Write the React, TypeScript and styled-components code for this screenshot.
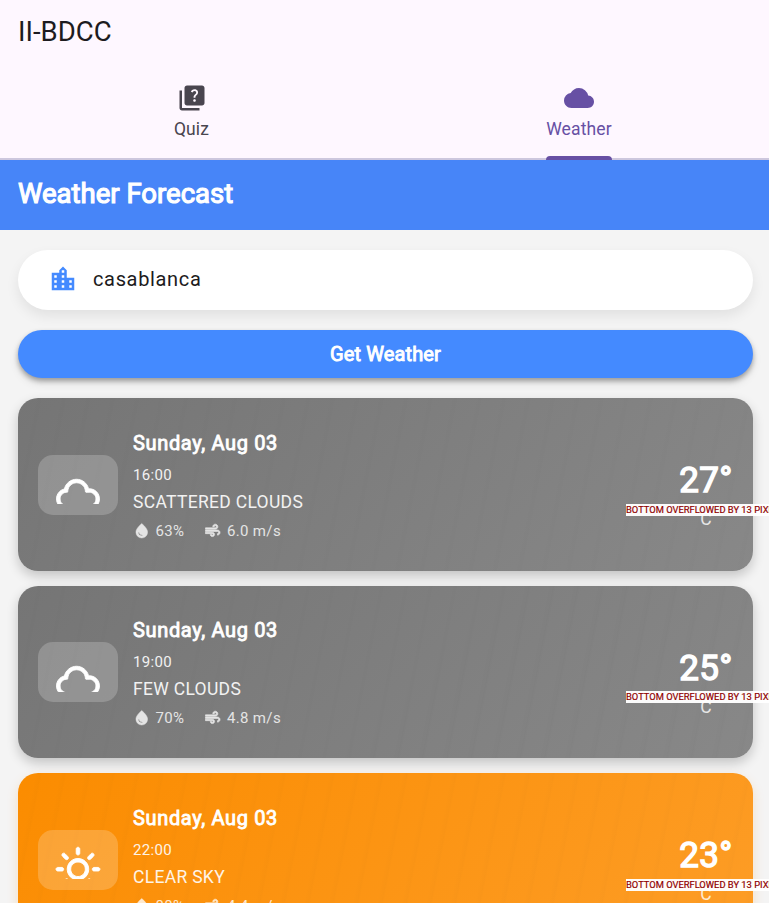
import React from 'react';
import styled, { createGlobalStyle } from 'styled-components';
import { MdQuiz, MdCloud, MdLocationCity, MdWaterDrop, MdAir } from 'react-icons/md';
import { WiCloud, WiDaySunny } from 'react-icons/wi';

const GlobalStyle = createGlobalStyle`
  * { box-sizing: border-box; }
  html, body { margin: 0; height: 903px; overflow: hidden; }
  body { background: #f4f4f4; font-family: Roboto, sans-serif; font-weight: 400; }
  svg { display: block; flex: none; }
  svg [fill="none"] { stroke: none; }
`;

const Screen = styled.div`
  width: 769px;
  height: 903px;
  overflow: hidden;
  display: flex;
  flex-direction: column;
`;

const AppBar = styled.header`
  flex: none;
  height: 160px;
  background: linear-gradient(#fef7ff 158.2px, #cdc7de 158.2px);
  display: flex;
  flex-direction: column;
`;

const AppTitle = styled.h1`
  margin: 0;
  height: 70px;
  padding: 15px 18px 0;
  font-size: 27.5px;
  line-height: 34px;
  font-weight: 400;
  color: #1d1b20;
`;

const Tabs = styled.nav`
  height: 90px;
  display: grid;
  grid-template-columns: 383px 1fr;
  column-gap: 6px;
`;

const Tab = styled.div<{ $active?: boolean }>`
  display: flex;
  flex-direction: column;
  align-items: center;
  padding-top: 13px;
  color: ${(p) => (p.$active ? '#6750a4' : '#49454f')};
  font-size: 17.5px;
  line-height: 25px;
  letter-spacing: 0.125px;
`;

const TabLabel = styled.span`
  margin-top: 4px;
`;

const Indicator = styled.div`
  width: 66px;
  height: 4px;
  margin-top: 14px;
  border-radius: 4px 4px 0 0;
  background: #6750a4;
`;

const Banner = styled.h2`
  flex: none;
  margin: 0;
  height: 69.5px;
  padding: 0 18px;
  font-size: 27.5px;
  line-height: 67px;
  font-weight: 400;
  -webkit-text-stroke: 1.15px #fff;
  color: #fff;
  background: #4785f8;
`;

const Content = styled.main`
  flex: none;
  display: flex;
  flex-direction: column;
  padding: 20px 16px 0 18px;
`;

const SearchField = styled.div`
  height: 60px;
  border-radius: 30px;
  background: #fff;
  box-shadow: 0 6px 13px rgba(0, 0, 0, 0.08);
  display: flex;
  align-items: center;
  gap: 15px;
  padding-left: 30px;
  padding-bottom: 1px;
  color: #448aff;
`;

const City = styled.span`
  color: #1d1b20;
  font-size: 20px;
  letter-spacing: 0.65px;
`;

const Button = styled.button`
  height: 48.5px;
  margin: 20px 0 20.4px;
  border: 0;
  border-radius: 25px;
  background: #448aff;
  box-shadow: 0 3px 5px rgba(0, 0, 0, 0.3), 0 5px 10px rgba(0, 0, 0, 0.1);
  color: #fff;
  font: 400 20px Roboto, sans-serif;
  letter-spacing: 0.12px;
  -webkit-text-stroke: 0.9px #fff;
`;

const Forecasts = styled.section`
  display: flex;
  flex-direction: column;
  gap: 15px;
`;

const Card = styled.article<{ $sunny?: boolean }>`
  height: 172.5px;
  border-radius: 20px;
  padding: 0 20px;
  display: flex;
  align-items: center;
  background:
    repeating-linear-gradient(101deg, rgba(0, 0, 0, 0) 0 17px, rgba(0, 0, 0, 0.01) 22px, rgba(0, 0, 0, 0) 24px),
    ${(p) => (p.$sunny ? 'linear-gradient(135deg, #fb8c00, #fd9d27)' : 'linear-gradient(135deg, #757575, #888888)')};
  box-shadow: 0 5px 12px ${(p) => (p.$sunny ? 'rgba(251, 140, 0, 0.2)' : 'rgba(0, 0, 0, 0.2)')};
`;

const IconTile = styled.div`
  width: 80px;
  height: 60px;
  border-radius: 15px;
  background: rgba(255, 255, 255, 0.2);
  color: #fff;
  display: flex;
  justify-content: center;
  padding-top: 10px;
`;

const IconClip = styled.div`
  width: 62px;
  height: 39.5px;
  overflow: hidden;

  svg {
    margin-top: -1px;
    stroke: currentColor;
    stroke-width: 0.45px;
  }
`;

const Details = styled.div`
  flex: 1;
  margin-left: 15px;
  padding-top: 1px;
  color: #fff;
`;

const DateLine = styled.div`
  font-size: 20px;
  line-height: 28px;
  letter-spacing: 0.65px;
  -webkit-text-stroke: 0.85px #fff;
`;

const Time = styled.div`
  margin-top: 8px;
  font-size: 15px;
  line-height: 21px;
  letter-spacing: 0.33px;
  opacity: 0.9;
`;

const Condition = styled.div`
  margin-top: 4px;
  font-size: 17.5px;
  line-height: 25px;
  letter-spacing: 0.31px;
  opacity: 0.9;
`;

const Metrics = styled.div`
  display: flex;
  gap: 20px;
  margin-top: 5px;
  color: #fff;
  opacity: 0.8;

  svg {
    stroke: currentColor;
    stroke-width: 0.6px;
  }
`;

const Metric = styled.div`
  display: flex;
  align-items: center;
  gap: 5px;
  font-size: 15px;
  line-height: 22px;
  letter-spacing: 0.35px;
`;

const WindIcon = styled(MdAir)`
  && { stroke-width: 0.9px; }
`;

const Temperature = styled.div`
  position: relative;
  align-self: flex-start;
  width: 54px;
  margin-top: 61px;
  color: #fff;
  text-align: center;
`;

const Degrees = styled.div`
  font-size: 35px;
  line-height: 43px;
  letter-spacing: 0.31px;
  white-space: nowrap;
  -webkit-text-stroke: 1.4px #fff;
`;

const Unit = styled.div`
  font-size: 17.5px;
  line-height: 24px;
  margin-top: 5px;
  opacity: 0.8;
`;

const Overflow = styled.div`
  position: absolute;
  left: -53px;
  top: 44.3px;
  height: 12px;
  background: rgba(255, 255, 255, 0.97);
  color: #900000;
  font-size: 9.35px;
  line-height: 12px;
  white-space: nowrap;
  -webkit-text-stroke: 0.2px #900000;
`;

type Forecast = {
  date: string;
  time: string;
  condition: string;
  humidity: string;
  wind: string;
  degrees: string;
  sunny?: boolean;
};

const forecasts: Forecast[] = [
  { date: 'Sunday, Aug 03', time: '16:00', condition: 'SCATTERED CLOUDS', humidity: '63%', wind: '6.0 m/s', degrees: '27°' },
  { date: 'Sunday, Aug 03', time: '19:00', condition: 'FEW CLOUDS', humidity: '70%', wind: '4.8 m/s', degrees: '25°' },
  { date: 'Sunday, Aug 03', time: '22:00', condition: 'CLEAR SKY', humidity: '88%', wind: '4.4 m/s', degrees: '23°', sunny: true },
];

function ForecastCard({ item }: { item: Forecast }) {
  return (
    <Card $sunny={item.sunny}>
      <IconTile>
        <IconClip>{item.sunny ? <WiDaySunny size={62} /> : <WiCloud size={62} />}</IconClip>
      </IconTile>
      <Details>
        <DateLine>{item.date}</DateLine>
        <Time>{item.time}</Time>
        <Condition>{item.condition}</Condition>
        <Metrics>
          <Metric><MdWaterDrop size={17.5} />{item.humidity}</Metric>
          <Metric><WindIcon size={17.5} />{item.wind}</Metric>
        </Metrics>
      </Details>
      <Temperature>
        <Degrees>{item.degrees}</Degrees>
        <Unit>C</Unit>
        <Overflow>BOTTOM OVERFLOWED BY 13 PIXELS</Overflow>
      </Temperature>
    </Card>
  );
}

export default function App() {
  return (
    <Screen>
      <GlobalStyle />
      <AppBar>
        <AppTitle>II-BDCC</AppTitle>
        <Tabs>
          <Tab><MdQuiz size={30} /><TabLabel>Quiz</TabLabel></Tab>
          <Tab $active><MdCloud size={30} /><TabLabel>Weather</TabLabel><Indicator /></Tab>
        </Tabs>
      </AppBar>
      <Banner>Weather Forecast</Banner>
      <Content>
        <SearchField><MdLocationCity size={30} /><City>casablanca</City></SearchField>
        <Button>Get Weather</Button>
        <Forecasts>
          {forecasts.map((item) => <ForecastCard key={item.time} item={item} />)}
        </Forecasts>
      </Content>
    </Screen>
  );
}
